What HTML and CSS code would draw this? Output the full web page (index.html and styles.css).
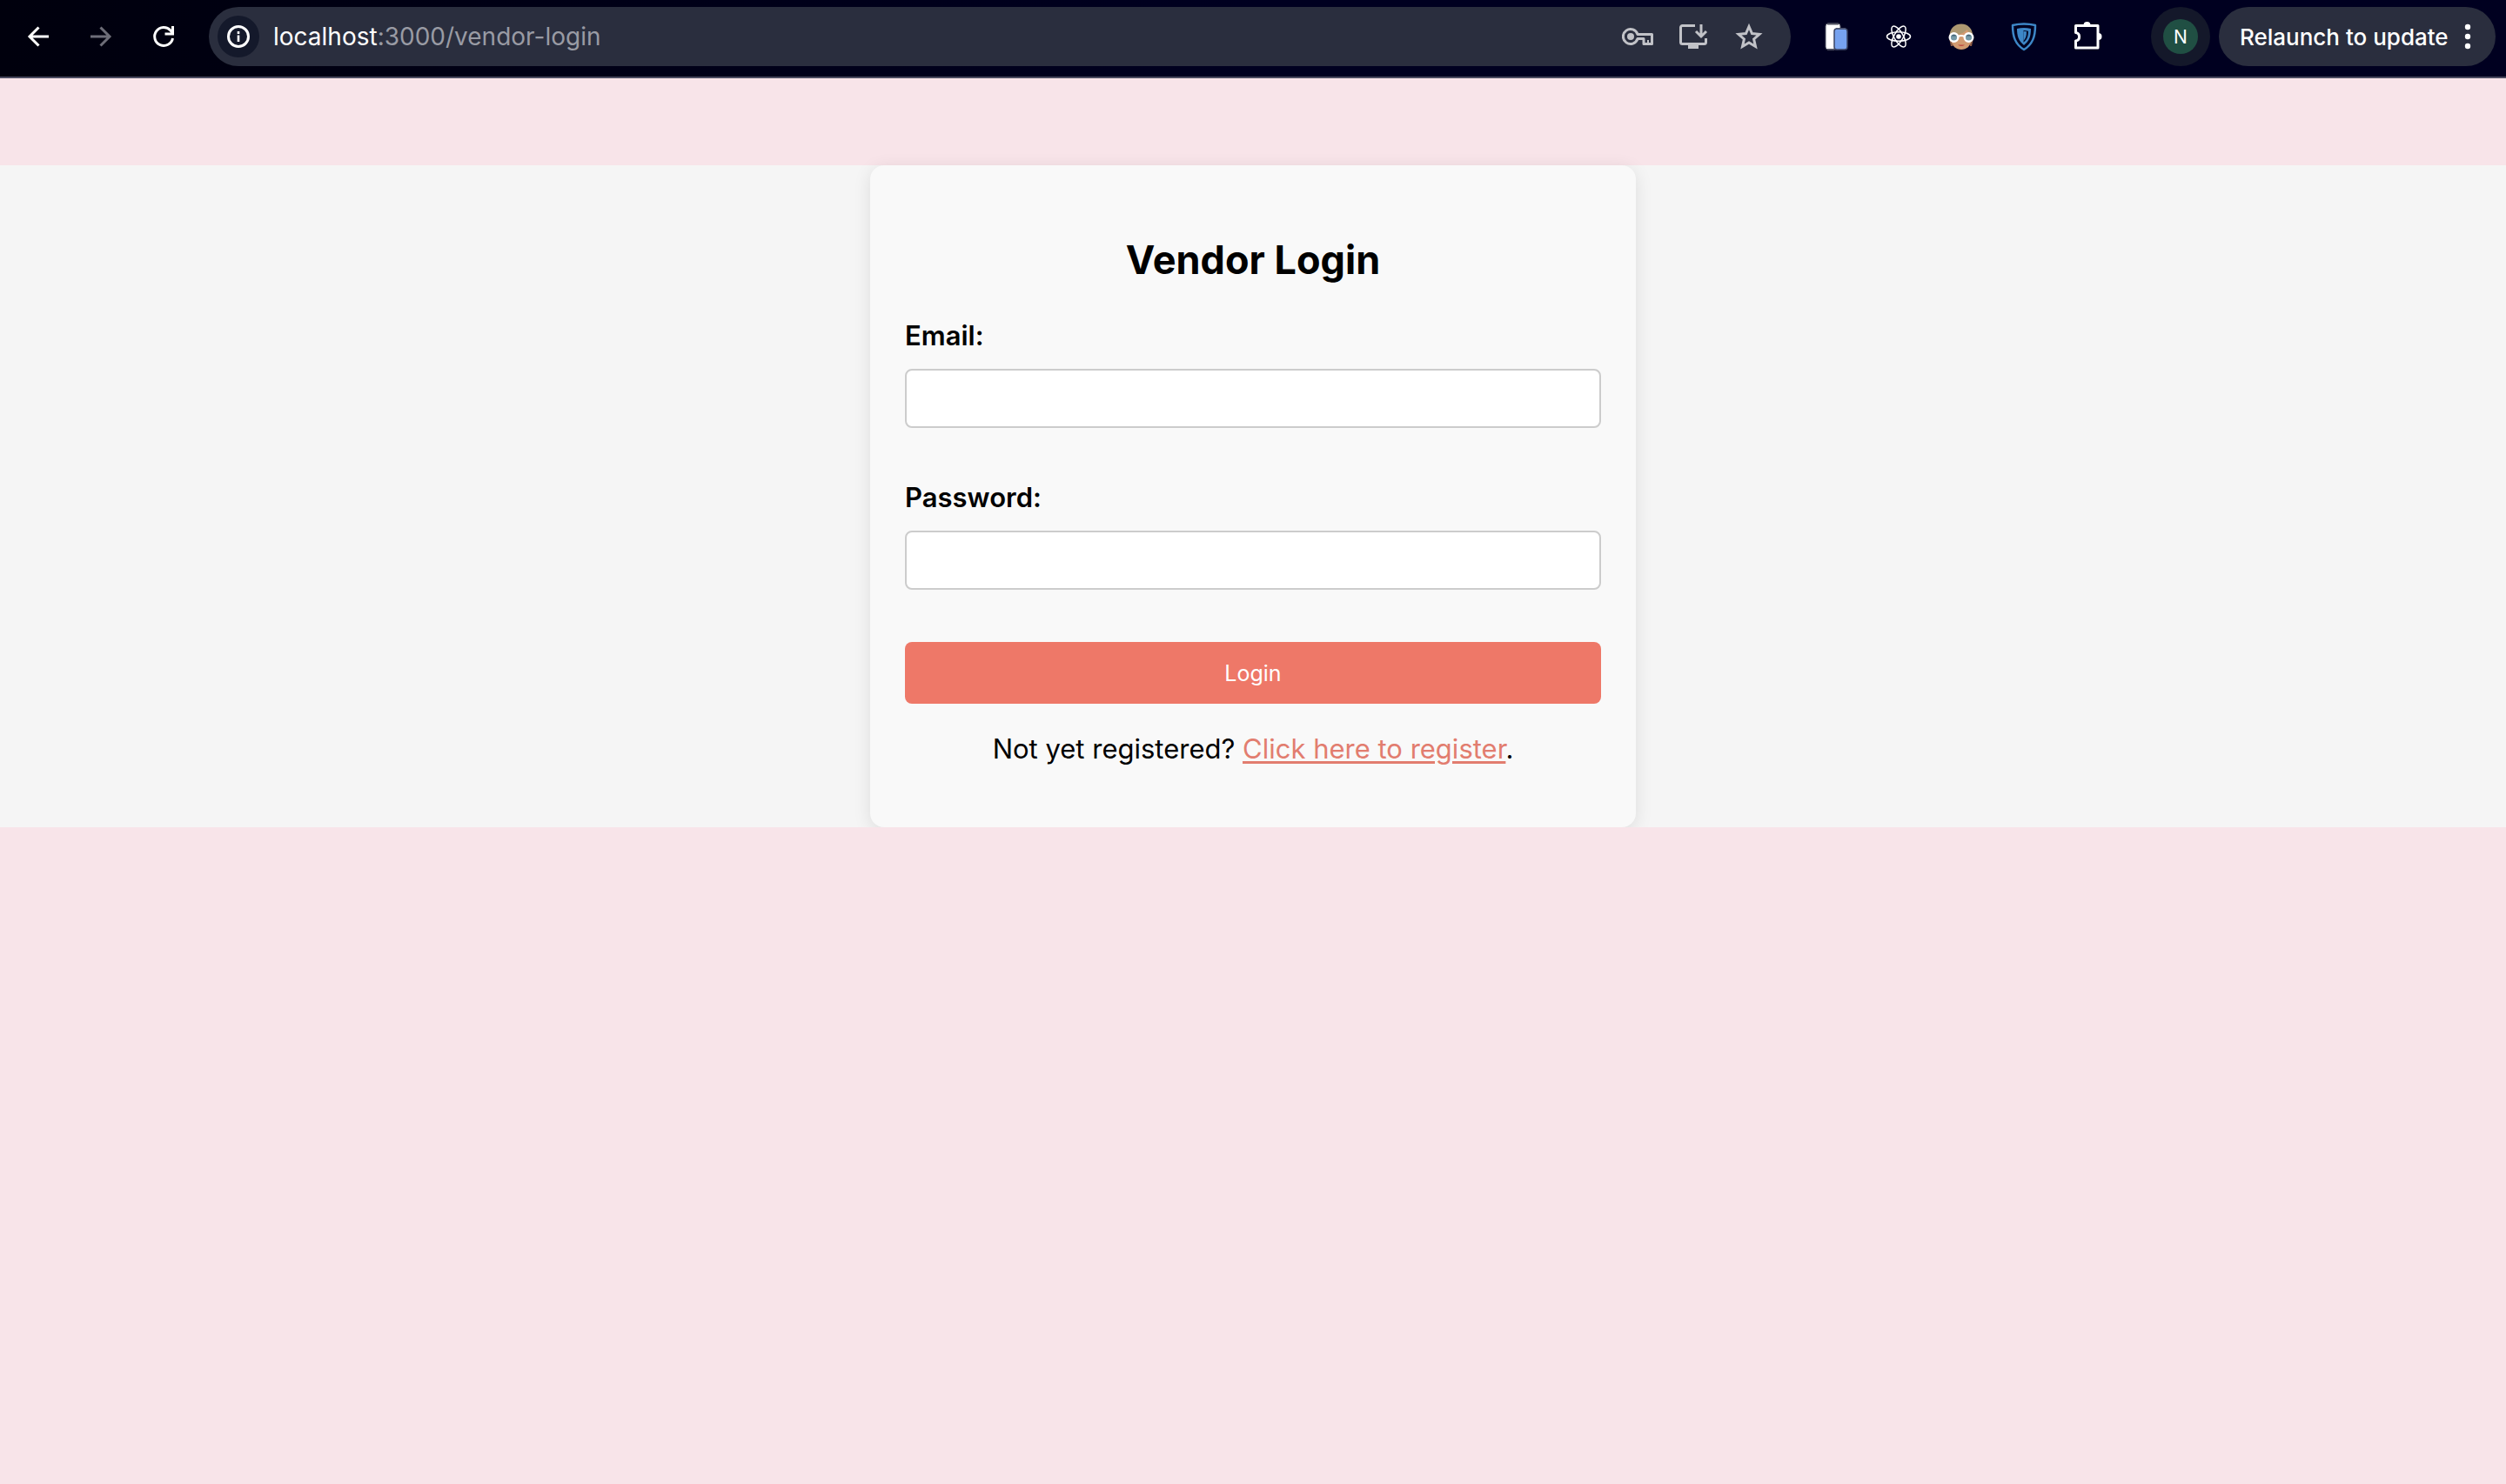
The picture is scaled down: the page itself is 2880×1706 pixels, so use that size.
FILE: index.html
```html
<!DOCTYPE html>
<html lang="en">
<head>
<meta charset="utf-8">
<meta name="viewport" content="width=device-width, initial-scale=1">
<title>Vendor Login</title>
<link rel="stylesheet" href="styles.css">
</head>
<body>
<header class="toolbar">
  <nav class="tool-group" aria-label="Navigation">
    <button class="tool" type="button" aria-label="Back">
      <svg width="28" height="28" viewBox="0 0 28 28" fill="none" stroke="#fff" stroke-width="3"><path d="M26 14H4M14.500 3.500L4 14l10.500 10.500"/></svg>
    </button>
    <button class="tool" type="button" aria-label="Forward">
      <svg width="28" height="28" viewBox="0 0 28 28" fill="none" stroke="#6d6d78" stroke-width="3"><path d="M2 14h22M13.500 3.500L24 14 13.500 24.500"/></svg>
    </button>
    <button class="tool" type="button" aria-label="Reload">
      <svg width="28" height="28" viewBox="0 0 28 28" fill="none" stroke="#fff" stroke-width="3"><path d="M24.500 16A10.500 10.500 0 1 1 22 7l2.500 3M24.500 2v9h-9"/></svg>
    </button>
  </nav>

  <div class="address">
    <button class="site-info" type="button" aria-label="Site information">
      <svg width="28" height="28" viewBox="0 0 28 28" fill="none" stroke="#fff" stroke-width="3"><circle cx="14" cy="14" r="11.500"/><path d="M14 12.500V20M14 8v3" stroke-width="2.600"/></svg>
    </button>
    <div class="url" role="textbox" aria-label="Address">localhost<span class="url-path">:3000/vendor-login</span></div>
    <div class="address-actions">
      <button class="action" type="button" aria-label="Passwords">
        <svg width="36" height="22" viewBox="0 0 36 22" fill="none" stroke="#c1c2c7" stroke-width="3"><path d="M18 8.500A8.500 8.500 0 1 0 18 13.500H25V19.500H34.500V8.500Z" stroke-linejoin="round"/><circle cx="10" cy="11" r="4" fill="#c1c2c7" stroke="none"/><path d="M30 15v5" stroke-width="2"/></svg>
      </button>
      <button class="action" type="button" aria-label="Install app">
        <svg width="34" height="30" viewBox="0 0 34 30" fill="none" stroke="#c1c2c7" stroke-width="3"><path d="M19 2.500H4.500a2 2 0 0 0-2 2v17a2 2 0 0 0 2 2h25a2 2 0 0 0 2-2V17M26 1v13M20 9l6 6 6-6"/><path d="M11 24h12v5H11z" fill="#c1c2c7" stroke="none"/></svg>
      </button>
      <button class="action" type="button" aria-label="Bookmark">
        <svg width="32" height="32" viewBox="0 0 32 32" fill="none" stroke="#c1c2c7" stroke-width="3"><path d="M16 4.500l3.500 8 8.500 .8-6.400 5.700 1.900 8.500-7.500-4.500-7.500 4.500 1.900-8.500L4 13.300l8.500-.8z"/></svg>
      </button>
    </div>
  </div>

  <div class="tool-group">
    <button class="tool" type="button" aria-label="Responsive viewer">
      <svg width="28" height="34" viewBox="0 0 28 34"><rect x="2" y="2" width="17" height="30" rx="3" fill="#fff" stroke="#4d4f5e" stroke-width="1"/><path d="M4 2.500h13M4 32h8" stroke="#4d4f5e" stroke-width="2"/><rect x="12" y="8" width="15" height="24" rx="3" fill="#76a2ef" stroke="#3c4664" stroke-width="1.500"/><path d="M14 8h11" stroke="#4d5878" stroke-width="2"/></svg>
    </button>
    <button class="tool" type="button" aria-label="React developer tools">
      <svg width="30" height="30" viewBox="0 0 30 30" fill="none" stroke="#fff" stroke-width="1.500"><circle cx="15" cy="15" r="2.800" fill="#fff" stroke="none"/><ellipse cx="15" cy="15" rx="13.500" ry="5.200"/><ellipse cx="15" cy="15" rx="13.500" ry="5.200" transform="rotate(60 15 15)"/><ellipse cx="15" cy="15" rx="13.500" ry="5.200" transform="rotate(120 15 15)"/></svg>
    </button>
    <button class="tool" type="button" aria-label="Profile helper">
      <svg width="32" height="32" viewBox="0 0 32 32"><path d="M2.500 20h4v7H4zM25.500 20h4L28 27h-2z" fill="#8a5a45"/><path d="M3 17C3 8 9 3 16 3s13 5 13 14l-3 8H6z" fill="#d29a70"/><path d="M5 16h22v4c0 7-5 11-11 11S5 27 5 20z" fill="#d29a70"/><path d="M2.500 16C2.500 6 9 1.500 16 1.500c8 0 13 6 13 13C26 13 24 10 22.500 8 20 11 16 13 12 14 9 15 6 15 2.500 16z" fill="#ad9871"/><circle cx="7.500" cy="17" r="4.800" fill="#7599a7" stroke="#fff" stroke-width="2.400"/><circle cx="24.500" cy="17" r="4.800" fill="#7599a7" stroke="#fff" stroke-width="2.400"/><path d="M4.500 15.500a3.500 3.500 0 0 1 6 0zM21.500 15.500a3.500 3.500 0 0 1 6 0z" fill="#456577"/><path d="M12 16q4-2 8 0" stroke="#fff" stroke-width="2" fill="none"/><path d="M12 25.500q4 3 8 0z" fill="#bd4b42"/></svg>
    </button>
    <button class="tool" type="button" aria-label="VPN">
      <svg width="30" height="34" viewBox="0 0 30 34" fill="none"><path d="M2 4Q15 1 28 4C28 17 25 26 15 32 5 26 2 17 2 4Z" stroke="#3d87c7" stroke-width="2.500" stroke-linejoin="round"/><path d="M7 8q8-2 16 0c0 9-2 14-8 19C9 22 7 17 7 8z" fill="#3d87c7"/><path d="M14.500 10q3 0 5.500 .7c0 6-1.500 10-5.500 13z" fill="#050a29"/><path d="M14.500 11q2 0 3.500 .3c0 5-1 8-3.500 10.700z" fill="#3d87c7"/></svg>
    </button>
    <button class="tool" type="button" aria-label="Extensions">
      <svg width="36" height="36" viewBox="0 0 36 36" fill="none" stroke="#fff" stroke-width="3" stroke-linejoin="round"><path d="M5.500 5.500H31V31H5.500V23a4.800 4.800 0 0 0 0-9.500Z"/><path d="M14.500 5a4 4 0 0 1 8 0zM31.500 14a4 4 0 0 1 0 8z" fill="#fff" stroke="none"/></svg>
    </button>
  </div>

  <div class="account">
    <button class="profile" type="button" aria-label="Profile"><span class="avatar">N</span></button>
    <button class="relaunch" type="button">Relaunch to update
      <svg width="8" height="30" viewBox="0 0 8 30" fill="#fff"><circle cx="4" cy="4" r="3.200"/><circle cx="4" cy="15" r="3.200"/><circle cx="4" cy="26" r="3.200"/></svg>
    </button>
  </div>
</header>

<main class="login-section">
  <form class="card">
    <h1 class="title">Vendor Login</h1>
    <div class="field">
      <label class="label" for="email">Email:</label>
      <input class="input" id="email" type="email" name="email">
    </div>
    <div class="field">
      <label class="label" for="password">Password:</label>
      <input class="input" id="password" type="password" name="password">
    </div>
    <button class="submit" type="submit">Login</button>
    <p class="register">Not yet registered? <a class="register-link" href="#register">Click here to register</a>.</p>
  </form>
</main>
</body>
</html>
```
FILE: styles.css
```css
* {
  box-sizing: border-box;
}

body {
  margin: 0;
  background: #f8e4e9;
  color: #000;
  font-family: Inter, "Liberation Sans", sans-serif;
  font-size: 31px;
}

button {
  margin: 0;
  padding: 0;
  border: 0;
  background: none;
  color: #fff;
  font-family: inherit;
}

svg {
  display: block;
  flex: none;
}

/* Browser toolbar */
.toolbar {
  display: flex;
  align-items: center;
  gap: 18px;
  padding: 8px 12px 12px 10px;
  border-bottom: 2px solid #4a4a60;
  background: linear-gradient(90deg, #00000d, #000020 50%);
}

.tool-group {
  display: flex;
  gap: 4px;
}

.tool {
  display: grid;
  place-items: center;
  width: 68px;
  height: 68px;
}

.address {
  display: flex;
  flex: 1;
  align-items: center;
  height: 68px;
  padding: 0 20px 0 10px;
  border-radius: 34px;
  background: #2a2e3e;
}

.site-info {
  display: grid;
  place-items: center;
  width: 48px;
  height: 48px;
  border-radius: 50%;
  background: #14192b;
}

.url {
  flex: 1;
  padding-left: 16px;
  color: #fff;
  font-size: 28px;
}

.url-path {
  color: #999ba4;
}

.address-actions {
  display: flex;
  gap: 8px;
}

.action {
  display: grid;
  place-items: center;
  width: 56px;
  height: 56px;
}

.account {
  display: flex;
  gap: 10px;
  padding-left: 22px;
}

.profile {
  display: grid;
  place-items: center;
  width: 68px;
  height: 68px;
  border-radius: 50%;
  background: #14182a;
}

.avatar {
  display: grid;
  place-items: center;
  width: 40px;
  height: 40px;
  border-radius: 50%;
  background: #204f43;
  font-size: 21px;
}

.relaunch {
  display: flex;
  align-items: center;
  justify-content: space-between;
  width: 318px;
  height: 68px;
  padding: 0 28px 0 24px;
  border-radius: 34px;
  background: #2a2e3e;
  font-size: 26px;
  font-weight: 500;
}

/* Login form */
.login-section {
  margin-top: 100px;
  background: #f5f5f5;
}

.card {
  max-width: 880px;
  margin: 0 auto;
  padding: 40px;
  border-radius: 16px;
  background: #f9f9f9;
  box-shadow: 0 4px 20px rgba(0, 0, 0, 0.1);
}

.title {
  margin: 40px 0 38px;
  font-size: 45px;
  font-weight: 700;
  line-height: 58px;
  text-align: center;
}

.field {
  margin-bottom: 60px;
}

.label {
  display: block;
  margin-bottom: 18px;
  font-weight: 600;
  line-height: 40px;
}

.input {
  display: block;
  width: 100%;
  height: 68px;
  padding: 0 20px;
  border: 2px solid #ccc;
  border-radius: 8px;
  background: #fff;
  font-family: inherit;
  font-size: 26px;
}

.submit {
  display: block;
  width: 100%;
  height: 71px;
  border-radius: 8px;
  background: #ee7868;
  font-size: 25px;
}

.register {
  margin: 32px 0 30px;
  line-height: 40px;
  text-align: center;
}

.register-link {
  color: #e27d6f;
  text-decoration-thickness: 3px;
  text-underline-offset: 3px;
}
```
